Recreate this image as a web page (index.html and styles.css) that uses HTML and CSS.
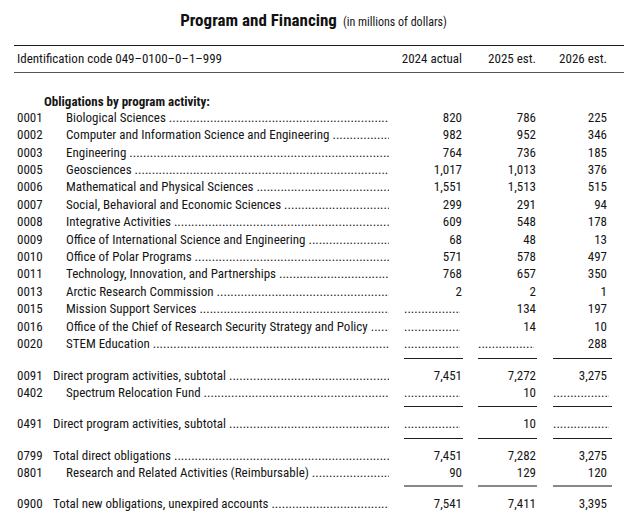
FILE: index.html
```html
<!DOCTYPE html>
<html lang="en">
<head>
<meta charset="utf-8">
<title>Program and Financing</title>
<link rel="stylesheet" href="styles.css">
</head>
<body>
<div class="page">
  <h1 class="title"><span class="title-main">Program and Financing</span> <span class="title-sub">(in millions of dollars)</span></h1>

  <div class="head">
    <div class="row">
      <span class="id">Identification code 049–0100–0–1–999</span>
      <span class="num">2024 actual</span>
      <span class="num">2025 est.</span>
      <span class="num last">2026 est.</span>
    </div>
  </div>

  <div class="body">
    <div class="row section"><span class="code"></span><span class="sec-label">Obligations by program activity:</span></div>

    <div class="row"><span class="code">0001</span><span class="label item">Biological Sciences</span><span class="num">820</span><span class="num">786</span><span class="num last">225</span></div>
    <div class="row"><span class="code">0002</span><span class="label item">Computer and Information Science and Engineering</span><span class="num">982</span><span class="num">952</span><span class="num last">346</span></div>
    <div class="row"><span class="code">0003</span><span class="label item">Engineering</span><span class="num">764</span><span class="num">736</span><span class="num last">185</span></div>
    <div class="row"><span class="code">0005</span><span class="label item">Geosciences</span><span class="num">1,017</span><span class="num">1,013</span><span class="num last">376</span></div>
    <div class="row"><span class="code">0006</span><span class="label item">Mathematical and Physical Sciences</span><span class="num">1,551</span><span class="num">1,513</span><span class="num last">515</span></div>
    <div class="row"><span class="code">0007</span><span class="label item">Social, Behavioral and Economic Sciences</span><span class="num">299</span><span class="num">291</span><span class="num last">94</span></div>
    <div class="row"><span class="code">0008</span><span class="label item">Integrative Activities</span><span class="num">609</span><span class="num">548</span><span class="num last">178</span></div>
    <div class="row"><span class="code">0009</span><span class="label item">Office of International Science and Engineering</span><span class="num">68</span><span class="num">48</span><span class="num last">13</span></div>
    <div class="row"><span class="code">0010</span><span class="label item">Office of Polar Programs</span><span class="num">571</span><span class="num">578</span><span class="num last">497</span></div>
    <div class="row"><span class="code">0011</span><span class="label item">Technology, Innovation, and Partnerships</span><span class="num">768</span><span class="num">657</span><span class="num last">350</span></div>
    <div class="row"><span class="code">0013</span><span class="label item">Arctic Research Commission</span><span class="num">2</span><span class="num">2</span><span class="num last">1</span></div>
    <div class="row"><span class="code">0015</span><span class="label item">Mission Support Services</span><span class="num"><span class="lead"></span></span><span class="num">134</span><span class="num last">197</span></div>
    <div class="row"><span class="code">0016</span><span class="label item">Office of the Chief of Research Security Strategy and Policy</span><span class="num"><span class="lead"></span></span><span class="num">14</span><span class="num last">10</span></div>
    <div class="row"><span class="code">0020</span><span class="label item">STEM Education</span><span class="num"><span class="lead"></span></span><span class="num"><span class="lead"></span></span><span class="num last">288</span></div>

    <div class="row rules"><span class="code"></span><span></span><span class="rule"></span><span class="rule"></span><span class="rule wide"></span></div>

    <div class="row"><span class="code">0091</span><span class="label">Direct program activities, subtotal</span><span class="num">7,451</span><span class="num">7,272</span><span class="num last">3,275</span></div>
    <div class="row"><span class="code">0402</span><span class="label item">Spectrum Relocation Fund</span><span class="num"><span class="lead"></span></span><span class="num">10</span><span class="num last"><span class="lead"></span></span></div>

    <div class="row rules"><span class="code"></span><span></span><span class="rule"></span><span class="rule"></span><span class="rule wide"></span></div>

    <div class="row"><span class="code">0491</span><span class="label">Direct program activities, subtotal</span><span class="num"><span class="lead"></span></span><span class="num">10</span><span class="num last"><span class="lead"></span></span></div>

    <div class="row rules"><span class="code"></span><span></span><span class="rule"></span><span class="rule"></span><span class="rule wide"></span></div>

    <div class="row"><span class="code">0799</span><span class="label">Total direct obligations</span><span class="num">7,451</span><span class="num">7,282</span><span class="num last">3,275</span></div>
    <div class="row"><span class="code">0801</span><span class="label item">Research and Related Activities (Reimbursable)</span><span class="num">90</span><span class="num">129</span><span class="num last">120</span></div>

    <div class="row rules gray"><span class="code"></span><span></span><span class="rule"></span><span class="rule"></span><span class="rule wide"></span></div>

    <div class="row"><span class="code">0900</span><span class="label">Total new obligations, unexpired accounts</span><span class="num">7,541</span><span class="num">7,411</span><span class="num last">3,395</span></div>
  </div>
</div>
</body>
</html>
```
FILE: styles.css
```css
html, body {
  margin: 0;
  padding: 0;
  background: #ffffff;
}

body {
  font-family: "Roboto Condensed", "Liberation Sans", sans-serif;
  font-size: 13px;
  color: #151515;
}

.page {
  margin: 0 6px 0 14px;
  padding-top: 6px;
}

.title {
  margin: 0;
  text-align: center;
  line-height: 22px;
  font-weight: normal;
  padding: 0 11px 12px 0;
  border-bottom: 1px solid #1a1a1a;
}

.title-main {
  font-size: 17px;
  font-weight: 700;
  color: #111;
}

.title-sub {
  font-size: 12px;
}

.head {
  padding: 4px 0 5px;
  border-bottom: 1px solid #555;
}

.row {
  display: grid;
  grid-template-columns: 36px 336px 74px 74px 75px;
  line-height: 17.4px;
  padding-left: 3px;
  white-space: nowrap;
}

.head .row .id {
  grid-column: 1 / 3;
}

.num {
  text-align: right;
  padding-right: 1px;
}

.num.last {
  padding-right: 5px;
}

.body {
  padding-top: 20px;
}

.section {
  margin-bottom: -2px;
}

.section .sec-label {
  font-weight: 700;
  margin-left: -9px;
}

.label {
  overflow: hidden;
}

.label::after {
  content: " ...................................................................................................................................................................";
}

.label.item {
  padding-left: 13px;
}

.lead {
  display: block;
  margin-left: 15px;
  width: 56px;
  overflow: hidden;
  text-align: left;
}

.lead::after {
  content: "..............................";
}

.num.last .lead {
  margin-left: 16px;
}

.rules {
  line-height: 0;
  margin: 5px 0 8px;
}

.rule {
  display: block;
  margin-left: 15px;
  border-top: 1px solid #1e1e1e;
}

.rule.wide {
  margin-left: 16px;
}

.rules.gray .rule {
  border-top: 2px solid #888;
}

.rules.gray {
  margin: 3px 0 8px;
}
```
